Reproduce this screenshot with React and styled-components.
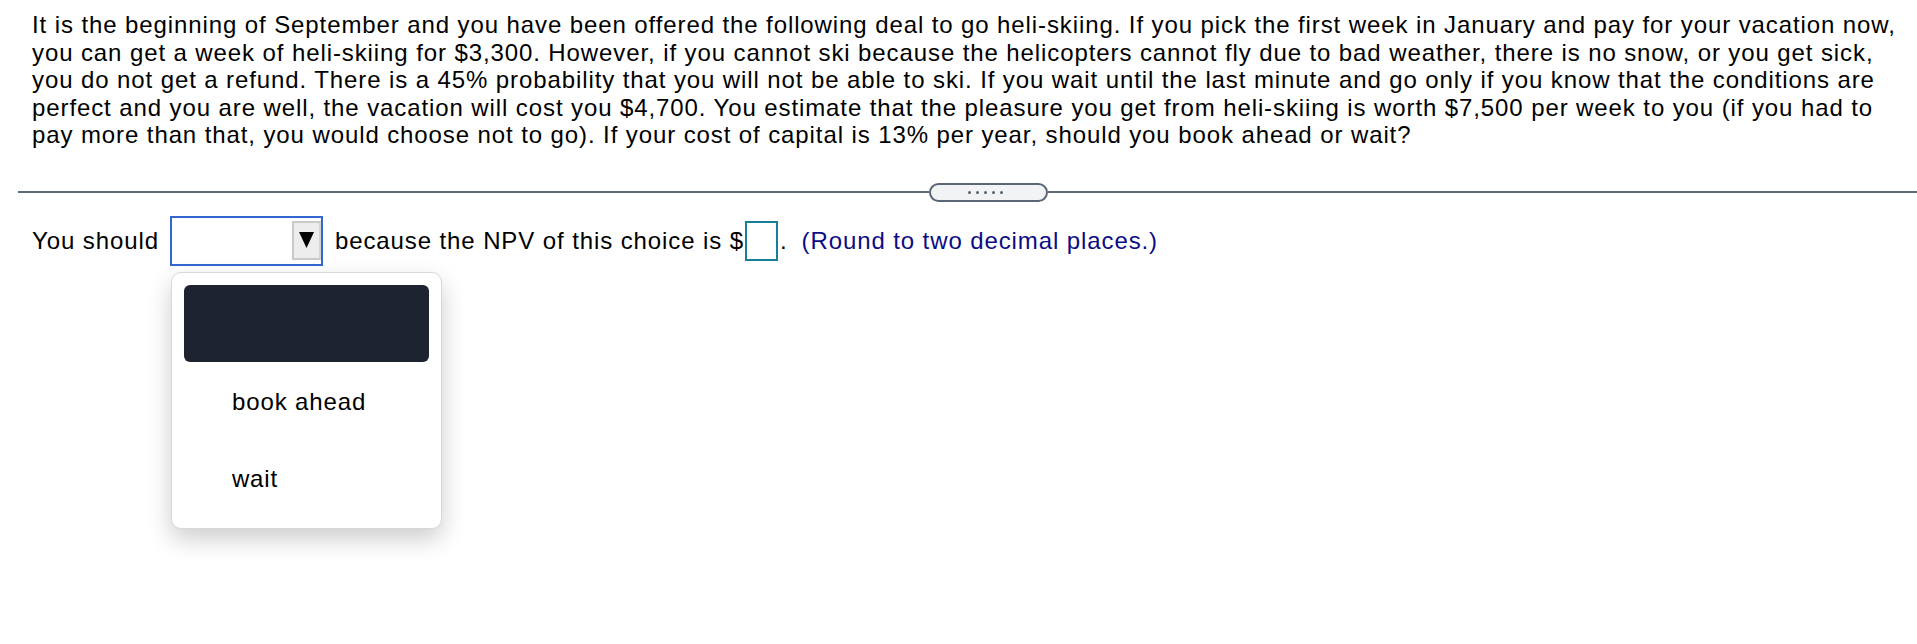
import React from 'react';
import styled, { createGlobalStyle } from 'styled-components';

const GlobalStyle = createGlobalStyle`
  html, body {
    margin: 0;
    background: #ffffff;
  }
  body {
    font-family: "Liberation Sans", Arial, sans-serif;
    color: #000;
  }
`

const Page = styled.div`
  box-sizing: border-box;
  min-height: 100vh;
  padding-left: 18px;
`

const Question = styled.p`
  margin: 0;
  padding: 11px 14px 0;
  font-size: 24px;
  letter-spacing: 0.9px;
  line-height: 27.6px;
`

const Divider = styled.div`
  display: flex;
  align-items: center;
  margin-top: 34px;
  height: 19px;
`

const Rule = styled.div`
  height: 2px;
  background: #5f6b7a;
  flex: ${p => (p.grow ? '1' : '0 0 911px')};
`

const Pill = styled.div`
  flex: 0 0 auto;
  box-sizing: border-box;
  width: 119px;
  height: 19px;
  border: 2px solid #5b6777;
  border-radius: 10px;
  background: #f2f3f5;
  display: flex;
  align-items: center;
  justify-content: center;
  gap: 5px;
  padding-right: 6px;
`

const Dot = styled.span`
  width: 3px;
  height: 3px;
  border-radius: 50%;
  background: #555f6d;
`

const AnswerRow = styled.div`
  display: flex;
  align-items: center;
  margin-top: 14px;
  padding-left: 14px;
  font-size: 24px;
  letter-spacing: 0.9px;
`

const Label = styled.span`
  white-space: pre;
`

const SelectWrap = styled.div`
  position: relative;
  margin: 0 12px 0 11px;
`

const SelectBox = styled.div`
  box-sizing: border-box;
  width: 153px;
  height: 50px;
  border: 2px solid #3367d0;
  display: flex;
  align-items: center;
  justify-content: flex-end;
  padding-bottom: 1px;
`

const ArrowButton = styled.div`
  box-sizing: border-box;
  width: 29px;
  height: 39px;
  background: #ededed;
  border: 2px solid #cacaca;
  border-right-color: #d4d4d4;
  display: flex;
  align-items: center;
  justify-content: center;
`

const NumBox = styled.div`
  box-sizing: border-box;
  width: 33px;
  height: 40px;
  border: 2px solid #177e9a;
  margin: 0 2px 0 1px;
`

const Hint = styled.span`
  color: #0c0c86;
  margin-left: 14px;
`

const Menu = styled.div`
  position: absolute;
  top: calc(100% + 6px);
  left: 1px;
  box-sizing: border-box;
  width: 271px;
  padding: 12px 12px 12px;
  background: #fff;
  border: 1px solid #d8d8d8;
  border-radius: 10px;
  box-shadow: 0 10px 24px rgba(0, 0, 0, 0.2);
  letter-spacing: 0.9px;
`

const Option = styled.div`
  box-sizing: border-box;
  height: 77px;
  display: flex;
  align-items: center;
  padding: 4px 0 0 48px;
  font-size: 24px;
  border-radius: 6px;
  background: ${p => (p.active ? '#1e2330' : 'transparent')};
  color: ${p => (p.active ? '#fff' : '#000')};
`

export default function App() {
  return (
    <Page>
      <GlobalStyle />
      <Question>
        It is the beginning of September and you have been offered the following deal to go heli-skiing. If you pick the first week in January and pay for your vacation now, you can get a week of heli-skiing for $3,300. However, if you cannot ski because the helicopters cannot fly due to bad weather, there is no snow, or you get sick, you do not get a refund. There is a 45% probability that you will not be able to ski. If you wait until the last minute and go only if you know that the conditions are perfect and you are well, the vacation will cost you $4,700. You estimate that the pleasure you get from heli-skiing is worth $7,500 per week to you (if you had to pay more than that, you would choose not to go). If your cost of capital is 13% per year, should you book ahead or wait?
      </Question>
      <Divider>
        <Rule />
        <Pill>
          <Dot /><Dot /><Dot /><Dot /><Dot />
        </Pill>
        <Rule grow />
      </Divider>
      <AnswerRow>
        <Label>You should</Label>
        <SelectWrap>
          <SelectBox>
            <ArrowButton>
              <svg width="15" height="16" viewBox="0 0 15 16">
                <polygon points="0,0 15,0 7.5,16" fill="#000" />
              </svg>
            </ArrowButton>
          </SelectBox>
          <Menu>
            <Option active />
            <Option>book ahead</Option>
            <Option>wait</Option>
          </Menu>
        </SelectWrap>
        <Label>because the NPV of this choice is $</Label>
        <NumBox />
        <Label>.</Label>
        <Hint>(Round to two decimal places.)</Hint>
      </AnswerRow>
    </Page>
  );
}
